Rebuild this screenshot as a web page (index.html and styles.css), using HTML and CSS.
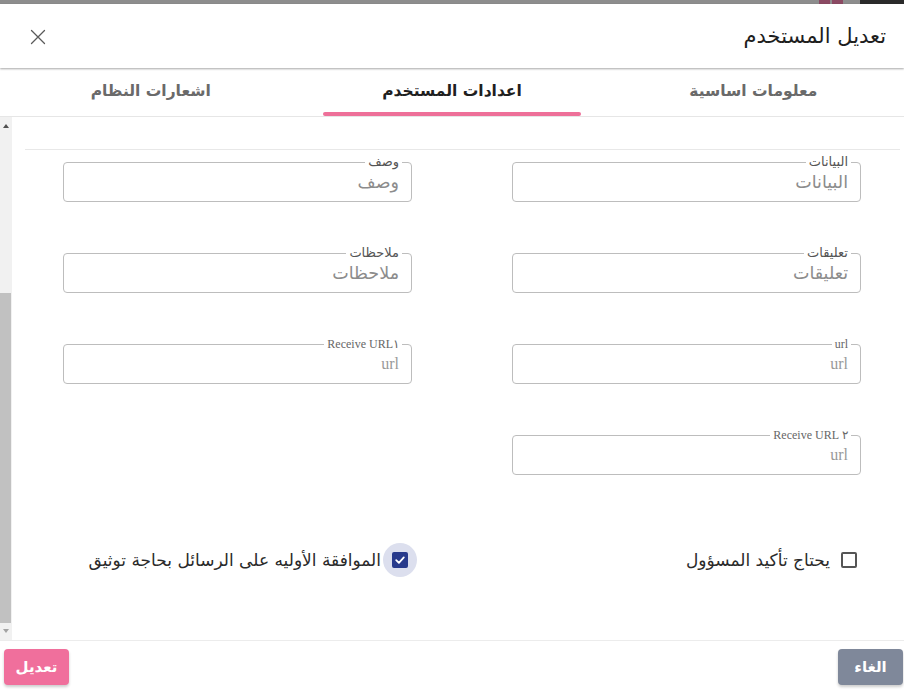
FILE: index.html
```html
<!DOCTYPE html>
<html lang="ar" dir="rtl">
<head>
<meta charset="utf-8">
<title>تعديل المستخدم</title>
<link rel="stylesheet" href="styles.css">
</head>
<body>
<div class="strip">
  <span class="strip-text"></span>
  <span class="strip-box"></span>
  <span class="strip-box"></span>
</div>
<div class="dialog">
  <header class="dlg-header">
    <h1 class="dlg-title">تعديل المستخدم</h1>
    <button class="close-btn" aria-label="close">
      <svg width="16" height="16" viewBox="0 0 16 16"><path d="M1.5 1.5 L14.5 14.5 M14.5 1.5 L1.5 14.5" stroke="#5a5a5a" stroke-width="1.3" fill="none" stroke-linecap="round"/></svg>
    </button>
  </header>
  <nav class="tabs">
    <div class="tab"><span class="tab-label">معلومات اساسية</span><span class="tab-bar"></span></div>
    <div class="tab active"><span class="tab-label">اعدادات المستخدم</span><span class="tab-bar"></span></div>
    <div class="tab"><span class="tab-label">اشعارات النظام</span><span class="tab-bar"></span></div>
  </nav>
  <div class="body-area">
    <div class="content">
      <div class="divider"></div>
      <div class="fields">
        <div class="field"><span class="field-label">البيانات</span><span class="field-value">البيانات</span></div>
        <div class="field"><span class="field-label">وصف</span><span class="field-value">وصف</span></div>
        <div class="field"><span class="field-label">تعليقات</span><span class="field-value">تعليقات</span></div>
        <div class="field"><span class="field-label">ملاحظات</span><span class="field-value">ملاحظات</span></div>
        <div class="field"><span class="field-label latin">url</span><span class="field-value latin">url</span></div>
        <div class="field"><span class="field-label latin">Receive URL١</span><span class="field-value latin">url</span></div>
        <div class="field"><span class="field-label latin">٢ Receive URL</span><span class="field-value latin">url</span></div>
        <div class="field-empty"></div>
      </div>
      <div class="checks">
        <label class="check">
          <span class="check-hit"><span class="box"></span></span>
          <span class="check-text">يحتاج تأكيد المسؤول</span>
        </label>
        <label class="check">
          <span class="check-hit focused"><span class="box checked"><svg width="12" height="12" viewBox="0 0 12 12"><path d="M2.2 6.2 L4.9 8.8 L9.8 3.4" stroke="#fff" stroke-width="1.8" fill="none" stroke-linecap="round" stroke-linejoin="round"/></svg></span></span>
          <span class="check-text">الموافقة الأوليه على الرسائل بحاجة توثيق</span>
        </label>
      </div>
    </div>
    <div class="scrollbar">
      <span class="sb-up"></span>
      <span class="sb-track"></span>
      <span class="sb-thumb"></span>
      <span class="sb-down"></span>
    </div>
  </div>
  <footer class="dlg-footer">
    <button class="btn btn-cancel">الغاء</button>
    <button class="btn btn-submit">تعديل</button>
  </footer>
</div>
</body>
</html>
```
FILE: styles.css
```css
* { box-sizing: border-box; }
html, body { margin: 0; padding: 0; background: #fff; }
body {
  font-family: "DejaVu Sans", "Noto Sans", sans-serif;
  color: #222;
  width: 904px;
  height: 690px;
  overflow: hidden;
}
.strip {
  height: 4px;
  background: #8d8d8d;
  display: flex;
  align-items: stretch;
  gap: 2px;
}
.strip-text { width: 44px; background: #2a2a2a; margin-inline-end: 15px; }
.strip-box { width: 11px; background: #8b4a63; }

.dialog { display: flex; flex-direction: column; }

.dlg-header {
  height: 64px;
  display: flex;
  align-items: center;
  justify-content: space-between;
  padding: 0 18px 0 29px;
  box-shadow: 0 1px 2px rgba(0,0,0,0.35);
  position: relative;
  z-index: 1;
}
.dlg-title {
  margin: 0;
  font-size: 21px;
  font-weight: normal;
  color: #1e1e1e;
}
.close-btn {
  background: none;
  border: 0;
  padding: 0;
  width: 18px;
  height: 18px;
  display: flex;
  align-items: center;
  justify-content: center;
  margin-top: 1px;
}

.tabs {
  display: grid;
  grid-template-columns: repeat(3, 1fr);
  height: 49px;
  border-bottom: 1px solid #e6e6e6;
}
.tab {
  display: flex;
  flex-direction: column;
  align-items: stretch;
}
.tab-label {
  flex: 1;
  display: flex;
  align-items: center;
  justify-content: center;
  font-size: 15.5px;
  font-weight: bold;
  color: #6a6a6a;
  padding-top: 1px;
}
.tab.active .tab-label { color: #1f1f1f; }
.tab-bar {
  height: 4px;
  margin: 0 22px;
  border-radius: 2px;
  background: transparent;
}
.tab.active .tab-bar { background: #ee7099; }

.body-area {
  display: flex;
  height: 523px;
}
.content {
  flex: 1;
  padding: 32px 0 0 0;
}
.divider {
  height: 1px;
  background: #e8e8e8;
  margin: 0 4px 0 13px;
}
.fields {
  display: grid;
  grid-template-columns: 349px 349px;
  column-gap: 100px;
  row-gap: 51px;
  padding: 0 43px 0 51px;
  margin-top: 12px;
}
.field {
  position: relative;
  height: 40px;
  border: 1px solid #bdbdbd;
  border-radius: 4px;
  display: flex;
  align-items: center;
  padding: 0 12px;
}
.field-label {
  position: absolute;
  top: -9px;
  right: 9px;
  padding: 0 3px;
  background: #fff;
  font-size: 13px;
  line-height: 16px;
  color: #555;
}
.field-value {
  font-size: 17.5px;
  color: #8c8c8c;
  line-height: 22px;
}
.latin { font-family: "Liberation Serif", "DejaVu Serif", serif; }
.field-label.latin { font-size: 12px; color: #666; top: -8px; line-height: 14px; }
.field-value.latin { font-size: 16px; color: #999; }

.checks {
  display: grid;
  grid-template-columns: 349px 349px;
  column-gap: 100px;
  padding: 0 38px 0 51px;
  margin-top: 68px;
}
.check {
  display: flex;
  align-items: center;
  gap: 0;
}
.check-hit {
  width: 34px;
  height: 34px;
  border-radius: 50%;
  display: flex;
  align-items: center;
  justify-content: center;
}
.check-hit.focused { background: #dcdfee; }
.box {
  width: 16px;
  height: 16px;
  border: 2px solid #555;
  border-radius: 2px;
  display: flex;
  align-items: center;
  justify-content: center;
}
.box.checked { background: #283a8c; border-color: #283a8c; }
.check-text {
  font-size: 17px;
  color: #2a2a2a;
  margin-right: 2px;
}

.scrollbar {
  width: 12px;
  background: #f1f1f1;
  display: flex;
  flex-direction: column;
  align-items: center;
}
.sb-up {
  margin-top: 7px;
  width: 0; height: 0;
  border-left: 3px solid transparent;
  border-right: 3px solid transparent;
  border-bottom: 4px solid #505050;
}
.sb-track { height: 165px; }
.sb-thumb { width: 11px; height: 330px; background: #c1c1c1; align-self: flex-end; }
.sb-down {
  margin-top: 6px;
  width: 0; height: 0;
  border-left: 3px solid transparent;
  border-right: 3px solid transparent;
  border-top: 4px solid #a3a3a3;
}

.dlg-footer {
  height: 50px;
  border-top: 1px solid #ececec;
  display: flex;
  justify-content: space-between;
  align-items: flex-start;
  padding: 8px 1px 0 4px;
}
.btn {
  width: 65px;
  height: 36px;
  border: 0;
  border-radius: 4px;
  color: #fff;
  font-family: "DejaVu Sans", sans-serif;
  font-size: 15px;
  font-weight: bold;
  box-shadow: 0 2px 3px rgba(0,0,0,0.2);
}
.btn-cancel { background: #7f889a; }
.btn-submit { background: #f06f9c; }
```
